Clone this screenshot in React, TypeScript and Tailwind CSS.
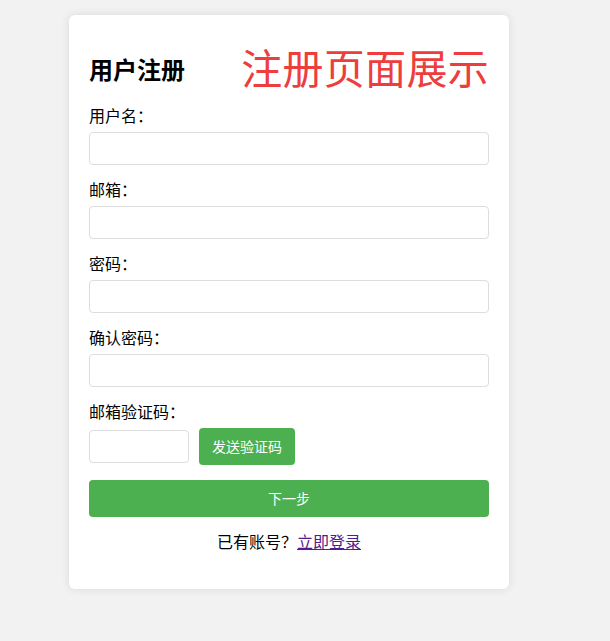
export default function App() {
  const fields = ["用户名：", "邮箱：", "密码：", "确认密码："];

  return (
    <div className="min-h-screen bg-[#f2f2f2] pt-[15px] pb-[52px] font-['Liberation_Sans','Noto_Sans_CJK_SC',sans-serif] text-black">
      <div className="ml-[69px] w-[440px] rounded-md bg-white px-5 pt-5 pb-[36px] shadow-[0_0_10px_rgba(0,0,0,0.1)]">
        {/* Header */}
        <div className="flex h-[71px] items-center justify-between">
          <h2 className="text-2xl leading-none font-bold">用户注册</h2>
          <span className="text-[41px] leading-none tracking-[0.3px] text-[#ee3d3d]">注册页面展示</span>
        </div>

        {/* Fields */}
        {fields.map((label) => (
          <div key={label}>
            <label className="mb-[5px] block text-base leading-[21px]">{label}</label>
            <input
              type="text"
              className="mb-[15px] block h-[33px] w-full rounded border border-[#ddd] px-2 text-sm focus:outline-none"
            />
          </div>
        ))}

        {/* Verification code */}
        <label className="mb-[5px] block text-base leading-[21px]">邮箱验证码：</label>
        <div className="flex h-[37px] items-center gap-[10px]">
          <input
            type="text"
            className="h-[33px] w-[100px] rounded border border-[#ddd] px-2 text-sm focus:outline-none"
          />
          <button className="h-[37px] w-[96px] rounded bg-[#4caf50] text-sm text-white">发送验证码</button>
        </div>

        <button className="mt-[15px] block h-[37px] w-full rounded bg-[#4caf50] text-sm text-white">下一步</button>

        <p className="mt-[15px] text-center text-base leading-[21px]">
          已有账号？
          <a href="#" className="text-[#551a8b] underline">
            立即登录
          </a>
        </p>
      </div>
    </div>
  );
}
